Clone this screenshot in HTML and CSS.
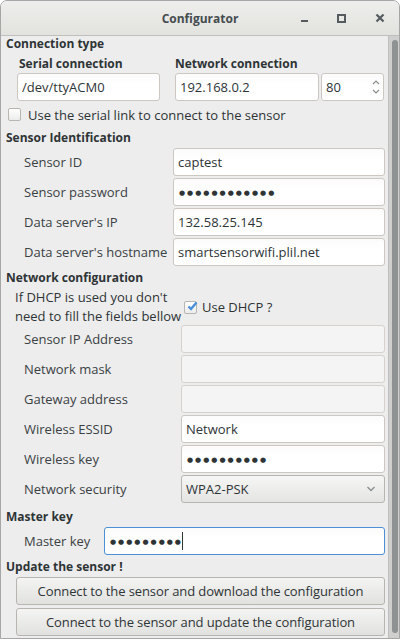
FILE: index.html
```html
<!DOCTYPE html>
<html lang="en">
  <head>
    <meta charset="UTF-8" />
    <link rel="stylesheet" href="styles.css">
  </head>
  <body>
    <div class="window">
      <div class="titlebar">
        <span class="title">Configurator</span>
        <div class="controls">
          <span class="ctl ctl-min"></span>
          <span class="ctl ctl-max"></span>
          <svg class="ctl-close" width="10" height="10" viewBox="0 0 10 10">
            <path d="M1.5 1.5 L8.5 8.5 M8.5 1.5 L1.5 8.5" stroke="#555b5e" stroke-width="2.2" />
          </svg>
        </div>
      </div>

      <div class="body">
        <div class="content">
          <div class="section-title first">Connection type</div>
          <div class="conn">
            <div class="conn-serial">
              <div class="sub-title">Serial connection</div>
              <div class="entry">/dev/ttyACM0</div>
            </div>
            <div class="conn-net">
              <div class="sub-title">Network connection</div>
              <div class="net-row">
                <div class="entry entry-ip">192.168.0.2</div>
                <div class="entry spin">
                  <span>80</span>
                  <span class="spin-arrows">
                    <svg width="8" height="6" viewBox="0 0 8 6"><path d="M1 5 L4 2 L7 5" fill="none" stroke="#8a8e8f" stroke-width="1.2" /></svg>
                    <svg width="8" height="6" viewBox="0 0 8 6"><path d="M1 1 L4 4 L7 1" fill="none" stroke="#8a8e8f" stroke-width="1.2" /></svg>
                  </span>
                </div>
              </div>
            </div>
          </div>
          <div class="check-row serial-check">
            <span class="checkbox"></span>
            <span>Use the serial link to connect to the sensor</span>
          </div>

          <div class="section-title">Sensor Identification</div>
          <div class="form-grid ident">
            <label>Sensor ID</label>
            <div class="entry">captest</div>
            <label>Sensor password</label>
            <div class="entry dots">●●●●●●●●●●●●</div>
            <label>Data server's IP</label>
            <div class="entry">132.58.25.145</div>
            <label>Data server's hostname</label>
            <div class="entry">smartsensorwifi.plil.net</div>
          </div>

          <div class="section-title">Network configuration</div>
          <div class="dhcp">
            <div class="dhcp-note">If DHCP is used you don't<br />need to fill the fields bellow</div>
            <div class="check-row dhcp-check">
              <span class="checkbox checked">
                <svg width="12" height="12" viewBox="0 0 12 12"><path d="M2.5 6.5 L5 9 L10.5 2.5" fill="none" stroke="#4a90d9" stroke-width="2.4" /></svg>
              </span>
              <span>Use DHCP ?</span>
            </div>
          </div>
          <div class="form-grid netconf">
            <label>Sensor IP Address</label>
            <div class="entry disabled"></div>
            <label>Network mask</label>
            <div class="entry disabled"></div>
            <label>Gateway address</label>
            <div class="entry disabled"></div>
            <label>Wireless ESSID</label>
            <div class="entry">Network</div>
            <label>Wireless key</label>
            <div class="entry dots">●●●●●●●●●●</div>
            <label>Network security</label>
            <div class="combo">
              <span>WPA2-PSK</span>
              <svg width="10" height="6" viewBox="0 0 10 6"><path d="M1.5 1 L5 4.5 L8.5 1" fill="none" stroke="#8a8e8f" stroke-width="1.3" /></svg>
            </div>
          </div>

          <div class="section-title master-title">Master key</div>
          <div class="form-grid master">
            <label>Master key</label>
            <div class="entry dots focused">●●●●●●●●●<span class="caret"></span></div>
          </div>

          <div class="section-title update-title">Update the sensor !</div>
          <div class="buttons">
            <button>Connect to the sensor and download the configuration</button>
            <button>Connect to the sensor and update the configuration</button>
          </div>
        </div>
        <div class="scrollbar">
          <div class="thumb"></div>
        </div>
      </div>
    </div>
  </body>
</html>
```

FILE: styles.css
```css
html,
body {
  margin: 0;
  padding: 0;
  background: #ffffff;
}

body {
  font-family: "Open Sans", "DejaVu Sans", sans-serif;
  font-size: 13px;
  color: #2e3436;
}

.window {
  width: 400px;
  height: 639px;
  box-sizing: border-box;
  border: 1px solid #a6a6a6;
  border-radius: 7px 7px 0 0;
  overflow: hidden;
  display: flex;
  flex-direction: column;
  background: #ededed;
}

/* Title bar */
.titlebar {
  height: 34px;
  flex: none;
  position: relative;
  display: flex;
  align-items: center;
  justify-content: center;
  background: linear-gradient(#eeeeec, #e2e2df);
  border-bottom: 1px solid #bfbfbc;
}

.title {
  font-weight: bold;
  color: #454c4e;
  font-size: 12px;
}

.controls {
  position: absolute;
  right: 0;
  top: 0;
  height: 34px;
  display: flex;
  align-items: center;
}

.ctl-min {
  width: 7px;
  height: 2px;
  background: #555b5e;
  margin: 6px 29px 0 0;
}

.ctl-max {
  width: 5px;
  height: 5px;
  border: 2px solid #555b5e;
  margin-right: 29px;
}

.ctl-close {
  margin-right: 14px;
}

/* Body */
.body {
  flex: 1;
  display: flex;
  min-height: 0;
}

.content {
  flex: 1;
  padding: 0 3px 0 5px;
}

.scrollbar {
  width: 11px;
  flex: none;
  background: #cfcfcd;
  border-left: 1px solid #bebebe;
  padding: 4px 0 5px;
  display: flex;
  justify-content: center;
}

.thumb {
  width: 6px;
  border-radius: 3px;
  background: #8f9293;
}

.section-title {
  font-weight: bold;
  font-size: 12px;
  height: 20px;
  line-height: 20px;
}

.section-title.first {
  height: 15px;
  line-height: 15px;
}

.section-title.master-title {
  margin-top: 4px;
}

.section-title.update-title {
  margin-top: 2px;
}

.sub-title {
  font-weight: bold;
  font-size: 12px;
  height: 19px;
  line-height: 19px;
}

/* Entries */
.entry,
.combo {
  height: 28px;
  box-sizing: border-box;
  border: 1px solid #cdc7c2;
  border-radius: 3px;
  background: linear-gradient(#fbfbfb, #ffffff 40%);
  padding: 0 4px;
  display: flex;
  align-items: center;
  white-space: nowrap;
  overflow: hidden;
}

.entry.disabled {
  background: #f4f4f4;
  border-color: #d6d1cd;
}

.entry.dots {
  font-size: 7px;
  letter-spacing: 2px;
  padding-left: 5px;
  color: #2e3436;
}

.entry.focused {
  border-color: #4a90d9;
}

.caret {
  width: 1px;
  height: 18px;
  background: #2e3436;
  margin-left: -1px;
}

/* Connection type */
.conn {
  display: flex;
  padding-left: 11px;
  margin-top: 3px;
}

.conn-serial {
  width: 143px;
  margin-right: 15px;
}

.conn-serial .sub-title {
  padding-left: 2px;
}

.conn-net {
  width: 209px;
}

.net-row {
  display: flex;
  gap: 2px;
}

.entry-ip {
  width: 144px;
}

.spin {
  flex: 1;
  justify-content: space-between;
  padding-right: 3px;
}

.spin-arrows {
  display: flex;
  flex-direction: column;
  gap: 4px;
}

.check-row {
  display: flex;
  align-items: center;
  gap: 7px;
  height: 26px;
  padding-left: 2px;
}

.check-row.serial-check {
  height: 27px;
}

.checkbox {
  width: 11px;
  height: 11px;
  border: 1px solid #b9b5b1;
  border-radius: 2px;
  background: linear-gradient(#ffffff, #ececec);
  position: relative;
  flex: none;
}

.checkbox svg {
  position: absolute;
  left: 1px;
  top: -2px;
}

/* Label / field grids */
.form-grid {
  display: grid;
  row-gap: 2px;
  align-items: center;
  padding-left: 18px;
}

.form-grid label {
  color: #3a4144;
}

.ident {
  grid-template-columns: 149px 212px;
  margin-bottom: 2px;
}

.netconf {
  grid-template-columns: 157px 204px;
  margin-top: -1px;
}

.master {
  grid-template-columns: 80px 281px;
}

.dhcp {
  display: flex;
  align-items: center;
  padding-left: 9px;
}

.dhcp-note {
  line-height: 19px;
  width: 167px;
}

.dhcp-check {
  gap: 5px;
}

.combo {
  background: linear-gradient(#f6f6f5, #e4e4e2);
  border-color: #b8b4b0;
  justify-content: space-between;
  padding-right: 8px;
}

/* Buttons */
.buttons {
  display: flex;
  flex-direction: column;
  gap: 3px;
  padding-left: 10px;
  width: 369px;
}

.buttons button {
  height: 28px;
  font-family: inherit;
  font-size: 13px;
  letter-spacing: -0.1px;
  color: #2e3436;
  border: 1px solid #b8b4b0;
  border-radius: 3px;
  background: linear-gradient(#f4f4f3, #e1e1df);
  padding: 0;
}
```
